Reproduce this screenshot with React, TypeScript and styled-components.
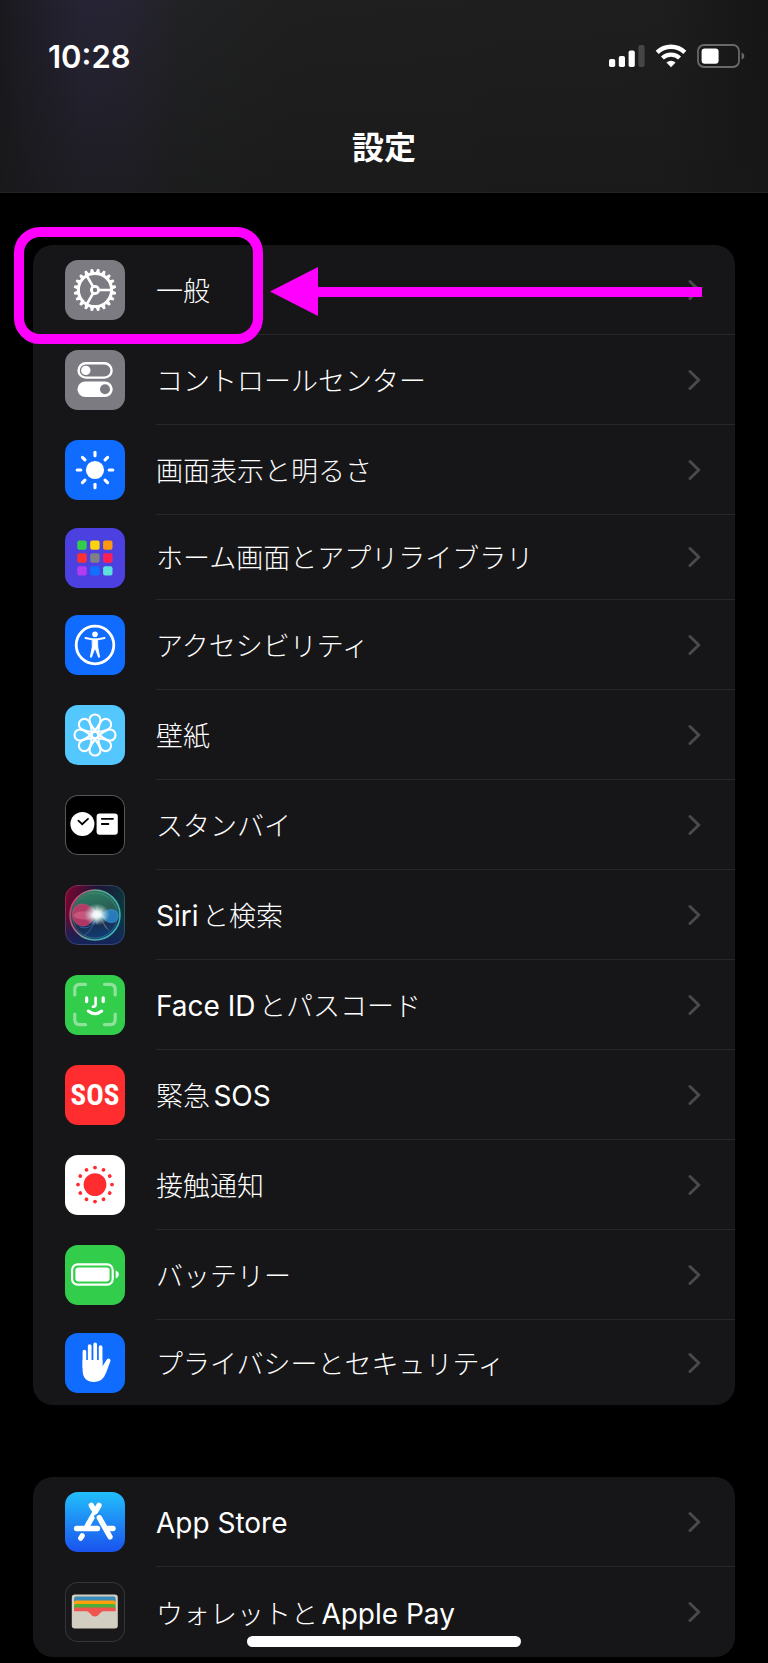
import { ReactNode } from 'react';
import styled, { createGlobalStyle } from 'styled-components';

const GlobalStyle = createGlobalStyle`
  * {
    box-sizing: border-box;
  }
  body {
    margin: 0;
    background: #000;
    color: #fff;
    font-family: Inter, 'Noto Sans CJK JP', sans-serif;
  }
`;

const Page = styled.div`
  padding-bottom: 6px;
`;

const Header = styled.header`
  display: flex;
  flex-direction: column;
  height: 193px;
  border-bottom: 1px solid #232324;
  background: linear-gradient(rgba(24, 24, 24, 0), rgba(24, 24, 24, 0.6)),
    linear-gradient(
      90deg,
      #19191d 0,
      #1d1c25 3%,
      #262435 11%,
      #262433 16%,
      #212224 24%,
      #1f1f1f 38%,
      #1e1e1e 86%,
      #151516 100%
    );
`;

const StatusBar = styled.div`
  display: flex;
  align-items: center;
  justify-content: space-between;
  height: 112px;
  padding: 0 23px 0 48px;
`;

const Time = styled.time`
  font-size: 31px;
  font-weight: 600;
`;

const StatusIcons = styled.div`
  display: flex;
  align-items: center;
  gap: 10px;
`;

const Title = styled.h1`
  margin: 0;
  text-align: center;
  font-size: 32px;
  font-weight: 700;
  line-height: 72px;
`;

const Main = styled.main`
  display: flex;
  flex-direction: column;
  gap: 72px;
  padding: 52px 33px 0;
`;

const Group = styled.ul`
  margin: 0;
  padding: 0;
  list-style: none;
  border-radius: 20px;
  background: #161618;
`;

const Item = styled.li`
  position: relative;
`;

const RowLink = styled.a<{ $compact?: boolean }>`
  display: flex;
  align-items: center;
  gap: 31px;
  height: ${(props) => (props.$compact ? 85 : 90)}px;
  padding-left: 32px;
  color: inherit;
  text-decoration: none;
`;

const Tile = styled.span<{ $bg: string; $border?: string }>`
  display: flex;
  flex: none;
  align-items: center;
  justify-content: center;
  width: 60px;
  height: 60px;
  overflow: hidden;
  border-radius: 13px;
  background: ${(props) => props.$bg};
  box-shadow: inset 0 0 0 1px ${(props) => props.$border || 'transparent'};
`;

const SosText = styled.span`
  font-family: 'Roboto Condensed', 'Open Sans Condensed', Roboto, sans-serif;
  font-size: 29px;
  font-weight: 700;
`;

const RowBody = styled.span`
  display: flex;
  flex: 1;
  align-items: center;
  justify-content: space-between;
  height: 100%;
  padding-right: 34px;
  border-bottom: 1px solid #27272a;

  ${Item}:last-child & {
    border-bottom: 0;
  }
`;

const Label = styled.span`
  padding-top: 4px;
  font-size: 27px;
  font-weight: 300;
  line-height: 40px;
  text-autospace: normal;
  white-space: nowrap;
`;

const Latin = styled.span`
  font-size: 28px;
  font-weight: 400;
`;

const HighlightBox = styled.div`
  position: absolute;
  top: -18px;
  left: -19px;
  width: 249px;
  height: 117px;
  border: 10px solid #f0f;
  border-radius: 26px;
  pointer-events: none;
`;

const Arrow = styled.div`
  position: absolute;
  top: 22px;
  right: 33px;
  left: 237px;
  display: flex;
  align-items: center;
  pointer-events: none;
`;

const ArrowShaft = styled.div`
  flex: 1;
  height: 10px;
  background: #f0f;
`;

const HomeIndicator = styled.div`
  position: fixed;
  bottom: 16px;
  left: 50%;
  width: 274px;
  height: 11px;
  margin-left: -137px;
  border-radius: 6px;
  background: #fff;
`;

type GlyphProps = { children: ReactNode };

function Glyph({ children }: GlyphProps) {
  return (
    <svg
      width='60'
      height='60'
      viewBox='0 0 60 60'
      fill='none'
      stroke='#fff'
      strokeLinecap='round'
      aria-hidden='true'
    >
      {children}
    </svg>
  );
}

function spread(count: number) {
  return Array.from({ length: count }, (_, i) => (360 / count) * i);
}

const GearIcon = () => (
  <Glyph>
    <circle cx='30' cy='30' r='16.6' strokeWidth='3' />
    {spread(20).map((deg) => (
      <path
        key={deg}
        d='M27.8 12.8 L28.9 8.8 H31.1 L32.2 12.8 Z'
        fill='#fff'
        stroke='none'
        transform={`rotate(${deg + 9} 30 30)`}
      />
    ))}
    <circle cx='30' cy='30' r='3.6' strokeWidth='2.8' />
    {spread(3).map((deg) => (
      <path
        key={deg}
        d='M34.5 30 H46'
        strokeWidth='2.7'
        transform={`rotate(${deg} 30 30)`}
      />
    ))}
  </Glyph>
);

const TogglesIcon = () => (
  <Glyph>
    <rect x='13.6' y='13.2' width='33' height='14.4' rx='7.2' strokeWidth='2.4' />
    <circle cx='20.8' cy='20.4' r='4.7' fill='#fff' stroke='none' />
    <rect x='12.5' y='31.6' width='35.2' height='15.4' rx='7.7' fill='#fff' stroke='none' />
    <circle cx='40' cy='39.3' r='5' fill='#7d7b82' stroke='none' />
  </Glyph>
);

const SunIcon = () => (
  <Glyph>
    <circle cx='30' cy='30' r='9.1' fill='#fff' stroke='none' />
    {spread(8).map((deg) => (
      <path
        key={deg}
        d='M30 12.2 V15.8'
        strokeWidth='3.1'
        transform={`rotate(${deg} 30 30)`}
      />
    ))}
  </Glyph>
);

const gridColors = [
  '#32cd4b', '#ffd20f', '#ff9810',
  '#ff3030', '#7f7f86', '#ff1f55',
  '#b33cf0', '#1070ff', '#5ce0dc',
];

const HomeGridIcon = () => (
  <Glyph>
    {gridColors.map((color, i) => (
      <rect
        key={color}
        x={12.3 + (i % 3) * 12.9}
        y={12.4 + Math.floor(i / 3) * 12.9}
        width='9.4'
        height='9.4'
        rx='2'
        fill={color}
        stroke='none'
      />
    ))}
  </Glyph>
);

const AccessibilityIcon = () => (
  <Glyph>
    <circle cx='30' cy='30' r='18.8' strokeWidth='2.8' />
    <circle cx='30' cy='19.2' r='2.8' fill='#fff' stroke='none' />
    <path d='M20.4 23 L27.5 24.4 H32.5 L39.6 23' strokeWidth='1.8' strokeLinejoin='round' />
    <path
      d='M27.4 24 H32.6 L32.8 32 L34.7 42 L33.6 42.4 L30.4 34 H29.6 L26.4 42.4 L25.3 42 L27.2 32 Z'
      fill='#fff'
      strokeWidth='.8'
      strokeLinejoin='round'
    />
  </Glyph>
);

const FlowerIcon = () => (
  <Glyph>
    {spread(8).map((deg) => (
      <path
        key={deg}
        d='M32.6 28 C29.4 25.4 24.5 18.8 24.5 15 A5.5 5.5 0 0 1 35.5 15 C35.5 18.8 30.6 25.4 27.4 28'
        strokeWidth='2.1'
        transform={`rotate(${deg} 30 30)`}
      />
    ))}
    <circle cx='30' cy='30' r='3.6' strokeWidth='1.6' />
  </Glyph>
);

const StandbyIcon = () => (
  <Glyph>
    <circle cx='17.4' cy='29' r='12' fill='#fff' stroke='none' />
    <path d='M13.4 25.6 L17.2 29.2 L23 23.8' stroke='#000' strokeWidth='1.8' />
    <rect x='31.6' y='18.4' width='21.2' height='21.4' rx='3' fill='#fff' stroke='none' />
    <path d='M36.8 23.8 H48 M36.8 29 H43.4' stroke='#000' strokeWidth='1.8' />
  </Glyph>
);

const SiriIcon = () => (
  <Glyph>
    <defs>
      <linearGradient id='siri-bg' x1='0' y1='.2' x2='1' y2='.5'>
        <stop offset='0' stopColor='#7c0632' />
        <stop offset='.45' stopColor='#1d1436' />
        <stop offset='1' stopColor='#0a3b3e' />
      </linearGradient>
      <linearGradient id='siri-floor' x1='0' y1='0' x2='0' y2='1'>
        <stop offset='.5' stopColor='#15245c' stopOpacity='0' />
        <stop offset='1' stopColor='#15245c' />
      </linearGradient>
      <linearGradient id='siri-orb' x1='.3' y1='0' x2='.5' y2='1'>
        <stop offset='0' stopColor='#2c8263' />
        <stop offset='.45' stopColor='#2a5c55' />
        <stop offset='.7' stopColor='#182f52' />
        <stop offset='1' stopColor='#103f78' />
      </linearGradient>
      <linearGradient id='siri-ring' x1='0' y1='.3' x2='1' y2='.6'>
        <stop offset='0' stopColor='#e0326e' />
        <stop offset='.45' stopColor='#61a79a' />
        <stop offset='1' stopColor='#35b3b9' />
      </linearGradient>
      <radialGradient id='siri-glow'>
        <stop offset='0' stopColor='#fff' />
        <stop offset='.3' stopColor='#f2ffff' stopOpacity='.9' />
        <stop offset='1' stopColor='#a8dcd8' stopOpacity='0' />
      </radialGradient>
    </defs>
    <rect width='60' height='60' fill='url(#siri-bg)' stroke='none' />
    <rect width='60' height='60' fill='url(#siri-floor)' stroke='none' />
    <circle cx='30' cy='30' r='25' fill='url(#siri-orb)' stroke='url(#siri-ring)' strokeWidth='1.6' />
    <circle cx='30' cy='30.5' r='22.5' stroke='url(#siri-ring)' strokeWidth='.6' opacity='.6' />
    <path
      d='M33 30 C27 22 22 18.5 16 19 C9 20 6 28 8.5 34 C11 41 19 43 24 39 C28 36 29 32 33 30 Z'
      fill='#c93568'
      fillOpacity='.85'
      stroke='#e85a8a'
      strokeWidth='.4'
    />
    <path d='M9 29 C17 24 25 27 33 30 C26 36 18 36 9 32' fill='#e9839f' fillOpacity='.4' stroke='none' />
    <path
      d='M33 30 C38 29 41 24 47 24.5 C53 25 55 31 52 35 C49 39 43 38 40 35 C38 33 36 31 33 30 Z'
      fill='#2b86cc'
      fillOpacity='.85'
      stroke='#4fb4ea'
      strokeWidth='.4'
    />
    <path d='M15 42 C24 45 28 40 32 32 C28 42 24 47 19 51' stroke='#4469b8' strokeWidth='.8' />
    <path d='M34 31 L45 47 L40 42 Z' fill='#b08a80' fillOpacity='.6' stroke='none' />
    <ellipse cx='32' cy='29.5' rx='13' ry='11' fill='url(#siri-glow)' stroke='none' />
    <path
      d='M32 19 L33.5 26 L38 23 L36 29 L42 33 L34.5 33 L32 40 L30 33 L23 32 L29 28 L25 20 L31 26 Z'
      fill='#fff'
      fillOpacity='.2'
      stroke='none'
    />
    <rect x='.5' y='.5' width='59' height='59' rx='12.5' stroke='#fff' strokeOpacity='.15' />
  </Glyph>
);

const FaceIdIcon = () => (
  <Glyph>
    {spread(4).map((deg) => (
      <path
        key={deg}
        d='M9.8 20 V14.5 Q9.8 9.3 15 9.3 H20.5'
        strokeWidth='3.2'
        strokeOpacity='.45'
        transform={`rotate(${deg} 30 29.5)`}
      />
    ))}
    <path d='M21.6 23 V26.5 M38.2 23 V26.5' strokeWidth='3.3' />
    <path d='M30.6 22.8 V29.5 Q30.6 31.7 27.9 31.7' strokeWidth='2.6' />
    <path d='M23.3 36 Q30 41.5 36.7 36' strokeWidth='3' />
  </Glyph>
);

const ExposureIcon = () => (
  <Glyph>
    <circle cx='30' cy='29.6' r='11.4' fill='#ff2d2f' stroke='none' />
    {spread(12).map((deg) => (
      <circle
        key={deg}
        cx='30'
        cy='12.6'
        r='1.9'
        fill='#ff2d2f'
        stroke='none'
        transform={`rotate(${deg} 30 29.6)`}
      />
    ))}
  </Glyph>
);

const BatteryIcon = () => (
  <Glyph>
    <rect x='7.1' y='19.4' width='40.6' height='20.2' rx='5.5' strokeWidth='2.2' />
    <rect x='10.4' y='22.6' width='34.2' height='13.8' rx='2.8' fill='#fff' stroke='none' />
    <path d='M50.7 25.6 Q53.8 26.8 53.8 29.5 Q53.8 32.2 50.7 33.4 Z' fill='#fff' stroke='none' />
  </Glyph>
);

const HandIcon = () => (
  <Glyph>
    <path
      d='M19.4 18.6 V34 M24.7 13 V30 M30.2 11.4 V30 M35.6 14 V32'
      strokeWidth='3.7'
    />
    <path
      d='M17.6 27 H37.4 V33.5 L41.8 26.6 Q43.2 24.9 44.8 25.9 Q46 26.9 45.3 28.6 L41.2 39.5 Q37.8 48.9 29.3 48.9 Q17.6 48.9 17.6 37 Z'
      fill='#fff'
      stroke='none'
    />
  </Glyph>
);

const AppStoreIcon = () => (
  <Glyph>
    <path d='M34 13.4 L22.4 33.6' strokeWidth='5.4' />
    <path d='M26.3 13.4 L28.3 16.8' strokeWidth='5.4' />
    <path d='M11.6 36.5 H32.5' strokeWidth='5.4' />
    <path d='M32 21.8 L39 34.2' stroke='#1f8df7' strokeWidth='7.6' strokeLinecap='butt' />
    <path d='M34.3 25.6 L45 44.8' strokeWidth='5.4' />
    <path d='M41 36.5 H48' strokeWidth='5.4' />
    <path d='M17.2 43.8 L15.7 46.2' strokeWidth='5.2' />
  </Glyph>
);

const WalletIcon = () => (
  <Glyph>
    <g stroke='none'>
      <rect x='6.8' y='12.6' width='46' height='34' rx='3' fill='#d2cfc2' />
      <path d='M9 20 V16.8 Q9 14.6 11.2 14.6 H48.5 Q50.7 14.6 50.7 16.8 V20 Z' fill='#3d8cb8' />
      <path d='M9 23 V20.4 Q9 18.4 11 18.4 H48.7 Q50.7 18.4 50.7 20.4 V23 Z' fill='#ff9f0a' />
      <path d='M9 27 V24 Q9 22 11 22 H48.7 Q50.7 22 50.7 24 V27 Z' fill='#4bb03a' />
      <path
        d='M9 29.2 V27.6 Q9 25.6 11 25.6 H48.7 Q50.7 25.6 50.7 27.6 V29.2 H38.5 Q36.4 29.2 35 31.2 Q32.8 34.5 29.9 34.5 Q27 34.5 24.8 31.2 Q23.4 29.2 21.3 29.2 Z'
        fill='#f0544f'
      />
    </g>
  </Glyph>
);

type RowData = {
  label: string;
  icon: ReactNode;
  bg: string;
  border?: string;
  compact?: boolean;
  highlighted?: boolean;
};

const groups: RowData[][] = [
  [
    { label: '一般', icon: <GearIcon />, bg: '#7d7b82', highlighted: true },
    { label: 'コントロールセンター', icon: <TogglesIcon />, bg: '#7d7b82' },
    { label: '画面表示と明るさ', icon: <SunIcon />, bg: '#106cff' },
    {
      label: 'ホーム画面とアプリライブラリ',
      icon: <HomeGridIcon />,
      bg: '#4d40e0',
      compact: true,
    },
    { label: 'アクセシビリティ', icon: <AccessibilityIcon />, bg: '#106cff' },
    { label: '壁紙', icon: <FlowerIcon />, bg: '#54c7ff' },
    { label: 'スタンバイ', icon: <StandbyIcon />, bg: '#000', border: '#57575a' },
    { label: 'Siriと検索', icon: <SiriIcon />, bg: '#15102c' },
    { label: 'Face IDとパスコード', icon: <FaceIdIcon />, bg: '#32cd4b' },
    { label: '緊急SOS', icon: <SosText>SOS</SosText>, bg: '#ff2d2f' },
    { label: '接触通知', icon: <ExposureIcon />, bg: '#fff' },
    { label: 'バッテリー', icon: <BatteryIcon />, bg: '#32cd4b' },
    {
      label: 'プライバシーとセキュリティ',
      icon: <HandIcon />,
      bg: '#106cff',
      compact: true,
    },
  ],
  [
    {
      label: 'App Store',
      icon: <AppStoreIcon />,
      bg: 'linear-gradient(#22bffb, #1a52ee)',
    },
    {
      label: 'ウォレットとApple Pay',
      icon: <WalletIcon />,
      bg: '#18181a',
      border: '#353537',
    },
  ],
];

function Chevron() {
  return (
    <svg width='13' height='22' viewBox='0 0 13 22' fill='none' aria-hidden='true'>
      <path
        d='M2 2.5 L10.8 11 L2 19.5'
        stroke='#4a4a4d'
        strokeWidth='3'
        strokeLinecap='round'
        strokeLinejoin='round'
      />
    </svg>
  );
}

function Pointer() {
  return (
    <Arrow>
      <svg width='48' height='49' viewBox='0 0 48 49' aria-hidden='true'>
        <path d='M0 24.5 L48 0 V49 Z' fill='#f0f' />
      </svg>
      <ArrowShaft />
    </Arrow>
  );
}

// Latin words are set slightly larger and heavier than the kana around them
function renderLabel(label: string) {
  return label
    .split(/([A-Za-z ]+)/)
    .filter(Boolean)
    .map((part) =>
      /[A-Za-z]/.test(part) ? <Latin key={part}>{part}</Latin> : part
    );
}

function Row({ label, icon, bg, border, compact, highlighted }: RowData) {
  return (
    <Item>
      <RowLink href='#' $compact={compact}>
        <Tile $bg={bg} $border={border}>
          {icon}
        </Tile>
        <RowBody>
          <Label>{renderLabel(label)}</Label>
          <Chevron />
        </RowBody>
      </RowLink>
      {highlighted && (
        <>
          <HighlightBox />
          <Pointer />
        </>
      )}
    </Item>
  );
}

function StatusGlyphs() {
  return (
    <StatusIcons>
      <svg width='36' height='24' viewBox='0 0 36 24' fill='#fff' aria-hidden='true'>
        <rect x='0' y='15' width='6.2' height='8' rx='1.8' />
        <rect x='9.8' y='12' width='6.2' height='11' rx='1.8' />
        <rect x='19.6' y='6.5' width='6.2' height='16.5' rx='1.8' />
        <rect x='29.4' y='1' width='6.2' height='22' rx='1.8' fill='#464647' />
      </svg>
      <svg width='32' height='24' viewBox='0 0 32 24' fill='none' aria-hidden='true'>
        <path d='M2.2 8.4 Q8 2.8 16 2.8 Q24 2.8 29.8 8.4' stroke='#fff' strokeWidth='4.4' />
        <path d='M7.4 14 Q11 10.6 16 10.6 Q21 10.6 24.6 14' stroke='#fff' strokeWidth='4.2' />
        <path d='M16 23.2 L11.4 18.6 Q16 15 20.6 18.6 Z' fill='#fff' />
      </svg>
      <svg width='48' height='24' viewBox='0 0 48 24' fill='none' aria-hidden='true'>
        <rect x='1' y='1' width='41' height='22' rx='6' stroke='#69696a' strokeWidth='1.8' />
        <rect x='4.6' y='4.4' width='17' height='15.4' rx='3.2' fill='#fff' />
        <path d='M44.6 8.2 Q47.4 9.6 47.4 12 Q47.4 14.4 44.6 15.8 Z' fill='#69696a' />
      </svg>
    </StatusIcons>
  );
}

export default function App() {
  return (
    <Page lang='ja'>
      <GlobalStyle />
      <Header>
        <StatusBar>
          <Time>10:28</Time>
          <StatusGlyphs />
        </StatusBar>
        <Title>設定</Title>
      </Header>
      <Main>
        {groups.map((rows) => (
          <Group key={rows[0].label}>
            {rows.map((row) => (
              <Row key={row.label} {...row} />
            ))}
          </Group>
        ))}
      </Main>
      <HomeIndicator />
    </Page>
  );
}
